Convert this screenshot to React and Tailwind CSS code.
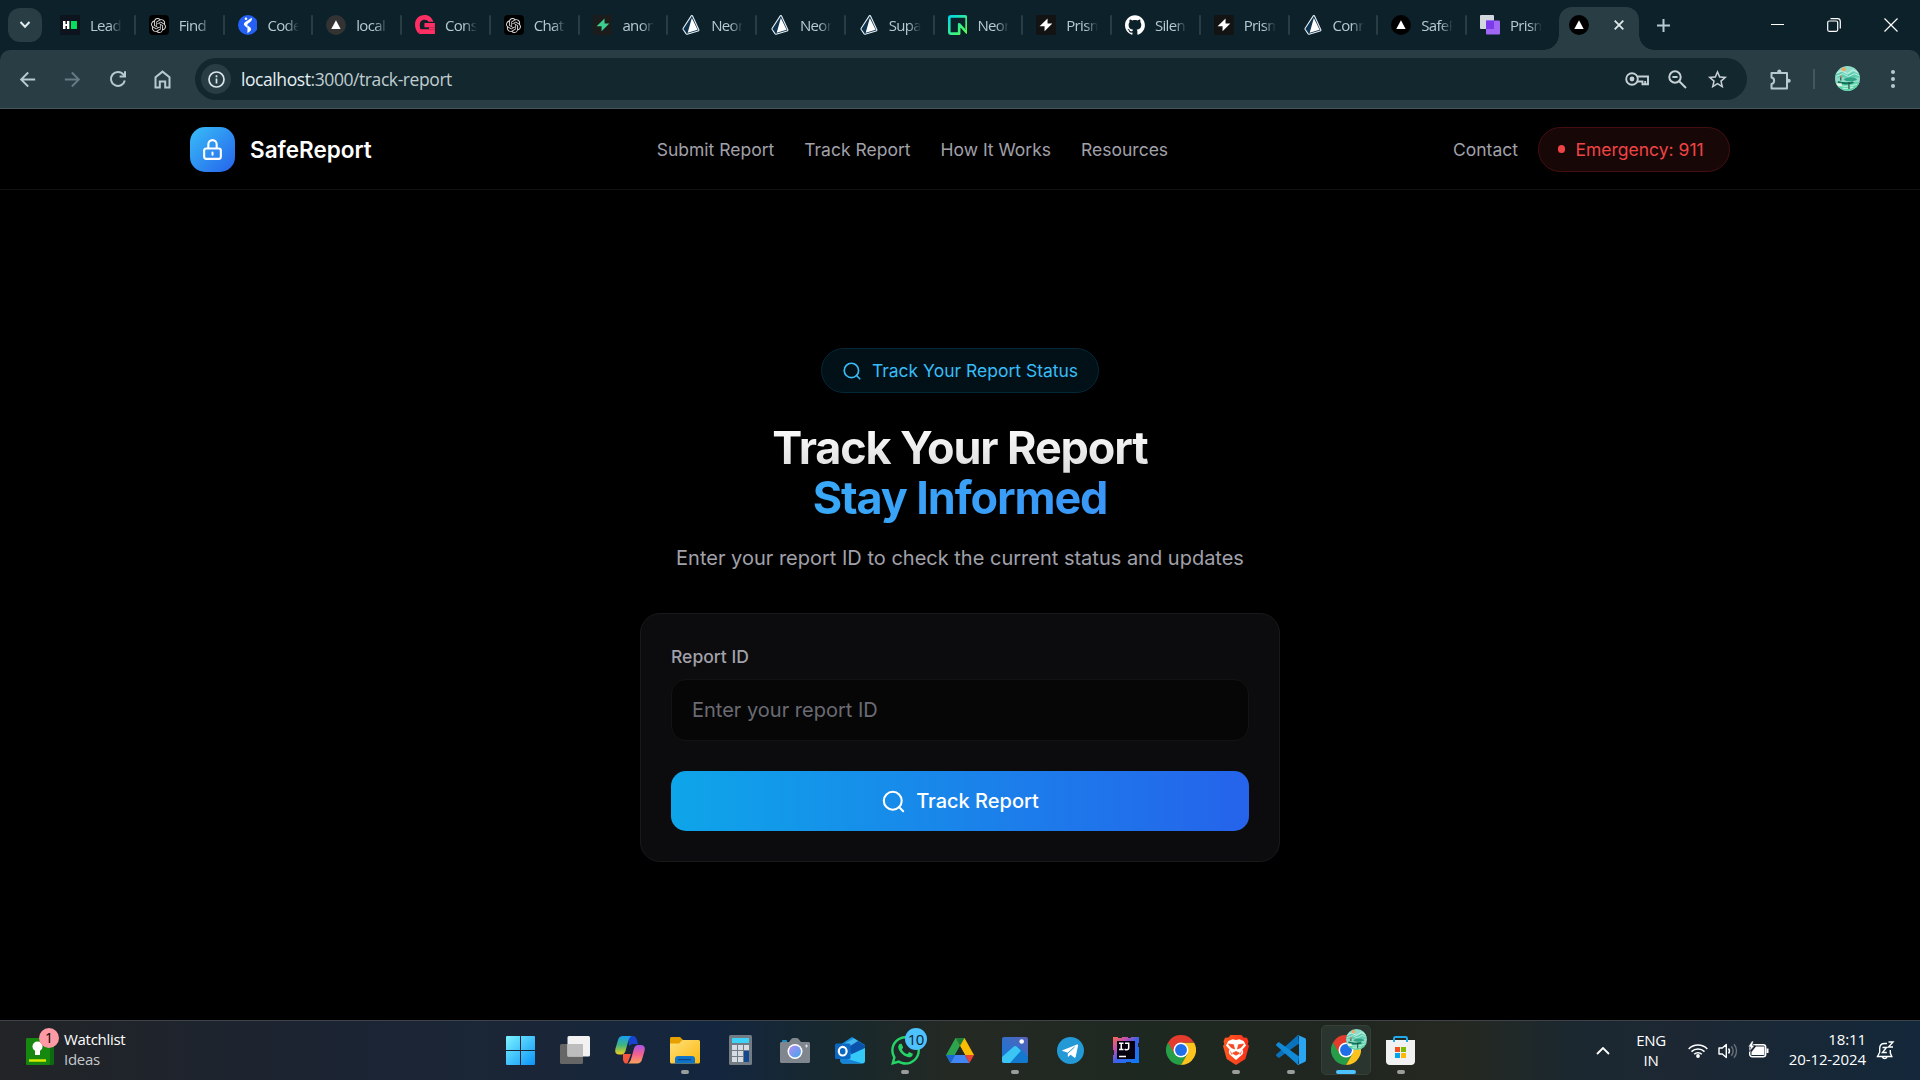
import React from "react";
import { SiOpenai, SiGithub } from "react-icons/si";
import { FaWhatsapp } from "react-icons/fa";
import { MdArrowBack, MdArrowForward, MdStarBorder } from "react-icons/md";

/* ---------- favicons ---------- */
const HackFav = () => (
  <svg className="size-5" viewBox="0 0 20 20">
    <rect width="20" height="20" fill="#0d141e" />
    <path d="M3 6h2.500v3H7V6h2.400v8H7v-3H5.500v3H3z" fill="#fff" />
    <rect x="11" y="6" width="6" height="8" fill="#05e060" />
  </svg>
);
const GptFav = () => (
  <span className="flex size-5 shrink-0 items-center justify-center rounded-[4px] bg-black text-[#d8d8d8]">
    <SiOpenai size={15} />
  </span>
);
const CodeFav = () => (
  <svg className="size-5" viewBox="0 0 20 20">
    <circle cx="10" cy="10" r="10" fill="#2560f4" />
    <circle cx="8" cy="3.800" r="1.300" fill="#fff" />
    <path d="M13.800 2.800c.5 2-.1 3.100-1.500 4.200L9.500 9v4.200L7 11c-1.500-1.200-1.500-2.500 0-3.800z" fill="#fff" />
    <path d="M9.500 10.200 12 12.300c1.500 1.300 1.500 2.500.3 3.800L9.500 18.200z" fill="#fff" />
  </svg>
);
const TriFav = ({ fill }) => (
  <svg className="size-5" viewBox="0 0 20 20">
    <circle cx="10" cy="10" r="10" fill={fill} />
    <path d="M10 5.300 14.700 14H5.300z" fill="#fff" />
  </svg>
);
const ConsFav = () => (
  <svg className="size-5" viewBox="0 0 20 20">
    <path d="M18.500 6.800C17 2.500 14 0 9.700 0 4 0 0 4 0 9.500 0 13 1.200 15.800 3.500 18.500L6 15.300C5 13.500 4.800 11.800 4.800 9.800 4.800 6.500 7 4.600 9.800 4.600c1.800 0 3 .7 3.900 2.200z" fill="#ff2e63" />
    <path d="M9.500 8H20v4.300H9.500z" fill="#ff2e63" />
    <path d="M5 14.200h15V19H4z" fill="#ff2e63" />
    <path d="M14 12.300h6v2h-6z" fill="#ff2e63" />
  </svg>
);
const BoltFav = ({ fill, bg }) => (
  <svg className="size-5" viewBox="0 0 20 20">
    <rect width="20" height="20" rx="1.500" fill={bg} />
    <path d="M11.600 3.500v5h4.800L8.600 16.300v-5.100H3.600z" fill={fill} />
  </svg>
);
const PrismaFav = () => (
  <svg className="size-5" viewBox="0 0 20 20">
    <path d="M10.300.8 2.200 13.200c-.3.500-.3.900 0 1.400l2.800 4.100c.3.500.7.600 1.200.5l11-3.200c.7-.2.900-.7.700-1.300L11.600 1c-.3-.7-.9-.7-1.300-.2z" fill="#0d3350" stroke="#e8eef2" strokeWidth="1.100" />
    <path d="M10.900 3 6.700 17.800l10-3z" fill="#fff" />
  </svg>
);
const NeonFav = () => (
  <svg className="size-5" viewBox="0 0 20 20">
    <defs>
      <linearGradient id="neon" x1="0" y1="0" x2="1" y2="1">
        <stop offset="0" stopColor="#00d8e8" />
        <stop offset="1" stopColor="#5cff4a" />
      </linearGradient>
    </defs>
    <path d="M18.700 17.500V3.200c0-1.300-.7-1.900-1.900-1.900H3.200c-1.300 0-1.900.6-1.900 1.900v13.600c0 1.200.6 1.900 1.900 1.900h8V9.200z" fill="none" stroke="url(#neon)" strokeWidth="2.600" strokeLinejoin="round" />
  </svg>
);
const GitFav = () => <SiGithub size={20} color="#fff" />;
const PurpleFav = () => (
  <svg className="size-5" viewBox="0 0 20 20">
    <rect width="14" height="14" rx="1" fill="#d0d8de" />
    <rect x="6" y="5.500" width="14" height="14" rx="1" fill="#a067f5" />
    <rect x="6" y="5.500" width="8" height="8.500" fill="#7c3aed" />
  </svg>
);

const TABS = [
  ["Lead", HackFav],
  ["Find", GptFav],
  ["Code", CodeFav],
  ["local", TriFav, { fill: "#333" }],
  ["Cons", ConsFav],
  ["Chat", GptFav],
  ["anon", BoltFav, { fill: "#3ecf8e", bg: "#1c1c1c" }],
  ["Neon", PrismaFav],
  ["Neon", PrismaFav],
  ["Supa", PrismaFav],
  ["Neon", NeonFav],
  ["Prism", BoltFav, { fill: "#fff", bg: "#131313" }],
  ["Silen", GitFav],
  ["Prism", BoltFav, { fill: "#fff", bg: "#131313" }],
  ["Conn", PrismaFav],
  ["SafeR", TriFav, { fill: "#000" }],
  ["Prism", PurpleFav],
];

function TabStrip() {
  return (
    <div className="flex h-[50px] bg-[#0c212a] text-[#b6cad2]">
      <div className="flex w-[47px] items-center pl-2">
        <div className="flex size-[34px] items-center justify-center rounded-xl bg-[#283d44]">
          <svg width="12" height="8" viewBox="0 0 12 8" fill="none" stroke="#e3edf0" strokeWidth="2">
            <path d="m1.500 1 4.500 4.700L10.500 1" />
          </svg>
        </div>
      </div>
      {TABS.map(([name, Fav, props], i) => (
        <div key={i} className="flex w-[88.750px] shrink-0 items-center pl-[13px]">
          <Fav {...props} />
          <span className="ml-[10px] w-[32px] overflow-hidden whitespace-nowrap text-[15px] tracking-[-0.650px] [mask-image:linear-gradient(to_right,black_60%,transparent)]">
            {name}
          </span>
          {i < TABS.length - 1 && <span className="ml-[12px] h-5 w-[2px] shrink-0 rounded bg-[#283d44]" />}
        </div>
      ))}
      <div className="relative ml-[3px] mt-[7px] flex h-[43px] w-[80px] shrink-0 items-center rounded-t-[13px] bg-[#283d44] pb-[7px] pl-[10px]">
        <span className="absolute bottom-0 -left-[15px] size-[15px] bg-[radial-gradient(circle_at_0_0,transparent_14.500px,#283d44_15px)]" />
        <span className="absolute bottom-0 -right-[15px] size-[15px] bg-[radial-gradient(circle_at_100%_0,transparent_14.500px,#283d44_15px)]" />
        <TriFav fill="#000" />
        <svg className="ml-[25px]" width="10" height="10" viewBox="0 0 10 10" stroke="#dfe8ec" strokeWidth="1.800">
          <path d="m.7.7 8.600 8.600M9.300.7.700 9.300" />
        </svg>
      </div>
      <div className="flex w-[49px] items-center justify-center">
        <svg width="13" height="13" viewBox="0 0 13 13" stroke="#b6cad2" strokeWidth="2">
          <path d="M6.500 0v13M0 6.500h13" />
        </svg>
      </div>
      <div className="ml-auto flex h-[49px] w-[171px] items-center text-white">
        <div className="flex w-[57px] justify-center"><span className="h-px w-[13px] bg-white" /></div>
        <div className="flex w-[56px] justify-center">
          <svg width="14" height="14" viewBox="0 0 14 14" fill="none" stroke="currentColor" strokeWidth="1.200">
            <rect x=".7" y="3" width="10" height="10.300" rx="1.500" />
            <path d="M3.500.700h7a2.800 2.800 0 0 1 2.800 2.800v7" />
          </svg>
        </div>
        <div className="flex w-[57px] justify-center">
          <svg width="14" height="14" viewBox="0 0 14 14" stroke="currentColor" strokeWidth="1.200">
            <path d="m.5.500 13 13M13.500.500l-13 13" />
          </svg>
        </div>
      </div>
    </div>
  );
}

function Avatar({ className }) {
  return (
    <svg className={className} viewBox="0 0 26 26">
      <defs><clipPath id="av"><circle cx="13" cy="13" r="13" /></clipPath></defs>
      <g clipPath="url(#av)">
        <rect width="26" height="26" fill="#8edcc8" />
        <path d="M0 9 7 6l6 3 6-3 7 3v3H0z" fill="#5fcbb0" />
        <path d="M0 8 7 5l6 3 6-4 7 4M1 11l7-3 6 3 6-3 5 2" stroke="#d4fff2" strokeWidth=".8" fill="none" />
        <circle cx="9" cy="3.500" r="2.200" fill="#f0a860" />
        <path d="M9 14c3-3 11-3 14 0-2 2-11 3-14 0z" fill="#2fa383" />
        <path d="M0 17h26v9H0z" fill="#5fd3a8" />
        <path d="M3 15.500c5 1.500 10 2 15 .5l2 1.500c-6 2.500-13 2-17 0z" fill="#11735a" />
        <path d="M5 20c5 2 12 1 18-1M8 23c4 1 8 0 11-1" stroke="#b6f2dd" strokeWidth="1.200" fill="none" />
        <path d="M1 18h6v3H3z" fill="#e9f3ea" />
        <path d="M6 11.500v3.500M14.500 17v7" stroke="#234b43" strokeWidth="1.200" />
        <circle cx="6" cy="11" r="1" fill="#d57c53" />
      </g>
    </svg>
  );
}

function Toolbar() {
  return (
    <div className="bg-[#0c212a]">
      <div className="flex h-[59px] items-center rounded-t-[10px] border-b border-[#45575d] bg-[#283d44] text-[#b6cad2]">
        <div className="flex w-[195px] items-center pl-[5px]">
          <div className="flex w-[45px] justify-center"><MdArrowBack size={23} /></div>
          <div className="flex w-[45px] justify-center text-[#667b83]"><MdArrowForward size={23} /></div>
          <div className="flex w-[45px] justify-center">
            <svg width="18" height="18" viewBox="0 0 18 18" fill="none" stroke="currentColor" strokeWidth="2">
              <path d="M15.800 10.500A7 7 0 1 1 14.500 4.600L16 6.300" />
              <path d="M16 1.200v5.300h-5.400" />
            </svg>
          </div>
          <div className="flex w-[45px] justify-center">
            <svg width="17" height="19" viewBox="0 0 17 19" fill="none" stroke="currentColor" strokeWidth="2">
              <path d="M1.500 7.200 8.500 1.600l7 5.600V17.500h-4.300v-6H5.800v6H1.500z" />
            </svg>
          </div>
        </div>
        <div className="flex h-[42px] w-[1552px] items-center rounded-full bg-[#13272e] pl-[6px] text-[#c5d0d4]">
          <span className="flex size-[30px] items-center justify-center rounded-full bg-[#283d44]">
            <svg width="17" height="17" viewBox="0 0 17 17" fill="none" stroke="#dbe6ea" strokeWidth="1.700">
              <circle cx="8.500" cy="8.500" r="7.500" />
              <path d="M8.500 7.500v5M8.500 4.300v1.900" />
            </svg>
          </span>
          <span className="ml-[10px] whitespace-nowrap text-[17.500px] tracking-[-0.420px] text-[#c0cdd1]">
            <span className="text-[#e6f0f3]">localhost</span>:3000/track-report
          </span>
          <div className="ml-auto mr-[10px] flex items-center">
            <div className="flex w-10 justify-center">
              <svg width="24" height="14" viewBox="0 0 24 14" fill="none" stroke="currentColor" strokeWidth="1.900">
                <circle cx="7" cy="7" r="5.800" />
                <circle cx="7" cy="7" r="2.400" fill="currentColor" stroke="none" />
                <path d="M12.300 4.500H23v7.700h-5.500V9.500h-5.200M20.200 9v3" />
              </svg>
            </div>
            <div className="flex w-10 justify-center">
              <svg width="19" height="19" viewBox="0 0 19 19" fill="none" stroke="currentColor" strokeWidth="2">
                <circle cx="7" cy="7" r="5.700" />
                <path d="m11.200 11.200 6.800 6.800M4.400 7h5.200" />
              </svg>
            </div>
            <div className="flex w-10 justify-center"><MdStarBorder size={23} /></div>
          </div>
        </div>
        <div className="flex w-[66px] justify-center">
          <svg width="21" height="21" viewBox="0 0 21 21" fill="none" stroke="currentColor" strokeWidth="2" strokeLinejoin="round">
            <path d="M1.500 4h15.500v15.500H1.500v-4.600a3.200 3.200 0 0 0 0-6.300z" />
            <circle cx="9.300" cy="2.600" r="2" fill="currentColor" stroke="none" />
            <circle cx="18.700" cy="11.700" r="2" fill="currentColor" stroke="none" />
          </svg>
        </div>
        <span className="h-5 w-[2px] bg-[#43575f]" />
        <Avatar className="-mt-px ml-[20px] size-[25px]" />
        <svg className="ml-[31px]" width="4" height="18" viewBox="0 0 4 18" fill="currentColor">
          <circle cx="2" cy="2" r="2" /><circle cx="2" cy="9" r="2" /><circle cx="2" cy="16" r="2" />
        </svg>
      </div>
    </div>
  );
}

/* ---------- web page ---------- */
const SearchIcon = ({ className }) => (
  <svg className={className} viewBox="0 0 24 24" fill="none" stroke="currentColor" strokeWidth="2" strokeLinecap="round" strokeLinejoin="round">
    <circle cx="11.300" cy="11.300" r="8.600" />
    <path d="m21.300 21.300-3.900-3.900" />
  </svg>
);

function SiteNav() {
  return (
    <nav className="h-[81px] border-b border-[#121212]">
      <div className="mx-auto flex h-20 w-[1540px] items-center justify-between text-[17.500px] text-[#a1a1aa]">
        <div className="flex items-center gap-[15px]">
          <div className="flex size-[45px] items-center justify-center rounded-[15px] bg-[linear-gradient(135deg,#38bdf8,#2563eb)]">
            <svg width="25" height="25" viewBox="0 0 24 24" fill="none" stroke="#fff" strokeWidth="2" strokeLinecap="round" strokeLinejoin="round">
              <path d="M12 15v2m-6 4h12a2 2 0 0 0 2-2v-6a2 2 0 0 0-2-2H6a2 2 0 0 0-2 2v6a2 2 0 0 0 2 2zm10-10V7a4 4 0 0 0-8 0v4h8z" />
            </svg>
          </div>
          <span className="pt-[2px] text-[22.500px] font-semibold text-white">SafeReport</span>
        </div>
        <div className="flex gap-[30px] pt-[2px]">
          <span>Submit Report</span>
          <span>Track Report</span>
          <span>How It Works</span>
          <span>Resources</span>
        </div>
        <div className="flex items-center gap-5">
          <span className="pt-[2px]">Contact</span>
          <div className="flex h-[45px] w-[192px] items-center gap-[10px] rounded-full border border-[#450f12] bg-[#180707] pl-[19px] text-[#ef4444]">
            <span className="size-[7.500px] rounded-full bg-[#ef4444]" />
            <span className="pt-[2px]">Emergency: 911</span>
          </div>
        </div>
      </div>
    </nav>
  );
}

function TrackForm() {
  return (
    <main className="flex flex-1 flex-col items-center pt-[158px]">
      <div className="flex h-[45px] items-center gap-[10px] rounded-full border border-[#03283a] bg-[#021017] px-[20px] text-[17.500px] text-[#38bdf8]">
        <SearchIcon className="size-5" />
        <span className="pt-[2px]">Track Your Report Status</span>
      </div>
      <h1 className="mt-[30px] text-center text-[45px] leading-[50px] font-bold tracking-[-0.025em]">
        <span className="block bg-[linear-gradient(to_bottom,#fff,#dcdcdc)] bg-clip-text text-transparent">Track Your Report</span>
        <span className="block w-[960px] bg-[linear-gradient(to_right,#38bdf8,#3b82f6)] bg-clip-text text-transparent">Stay Informed</span>
      </h1>
      <p className="mt-5 text-[20px] leading-[30px] text-[#a1a1aa]">Enter your report ID to check the current status and updates</p>
      <div className="mt-[40px] flex h-[249px] w-[640px] flex-col rounded-[20px] border border-[#19191b] bg-[#0c0c0e] px-[30px] pt-[30px]">
        <label className="text-[17.500px] leading-[25px] font-medium text-[#a1a1aa]">Report ID</label>
        <div className="mt-[10px] flex h-[62px] items-center rounded-[15px] border border-[#131314] bg-[#060606] px-5 text-[20px] text-[#6b6b74]">
          Enter your report ID
        </div>
        <button className="mt-[30px] flex h-[60px] items-center justify-center gap-[10px] rounded-[15px] bg-[linear-gradient(to_right,#0ea5e9,#2563eb)] text-[20px] font-medium text-white">
          <SearchIcon className="size-[25px]" />
          Track Report
        </button>
      </div>
    </main>
  );
}

/* ---------- taskbar icons ---------- */
const Windows = () => (
  <svg width="29" height="29" viewBox="0 0 29 29">
    <defs><linearGradient id="win" x1="0" y1="0" x2="29" y2="29" gradientUnits="userSpaceOnUse"><stop stopColor="#7cf3ff" /><stop offset="1" stopColor="#0a94f8" /></linearGradient></defs>
    <path d="M1 0h13v14H0V1a1 1 0 0 1 1-1zM15 0h13a1 1 0 0 1 1 1v13H15zM0 15h14v14H1a1 1 0 0 1-1-1zM15 15h14v13a1 1 0 0 1-1 1H15z" fill="url(#win)" />
  </svg>
);
const TaskView = () => (
  <svg width="30" height="28" viewBox="0 0 30 28">
    <rect y="8" width="23" height="20" rx="1.500" fill="#666" />
    <rect x="7.500" width="22.500" height="20.500" rx="1.500" fill="#f2f2f2" />
    <path d="M7.500 8H23v12.500H7.500z" fill="#bdbdbd" />
  </svg>
);
const Copilot = () => (
  <svg width="30" height="28" viewBox="0 0 30 28">
    <defs>
      <linearGradient id="cp1" x1="0" y1="0" x2="0" y2="1"><stop stopColor="#199df0" /><stop offset=".5" stopColor="#3fb67e" /><stop offset="1" stopColor="#f0cf1a" /></linearGradient>
      <linearGradient id="cp2" x1="0" y1="0" x2="0" y2="1"><stop stopColor="#a855e8" /><stop offset=".5" stopColor="#f4608f" /><stop offset="1" stopColor="#fba35c" /></linearGradient>
    </defs>
    <path d="M13 0h5c2.500 0 3.300 1.700 4 4l1 4h-6l-3 2z" fill="#1743cf" />
    <path d="M8 18h8l-3 8c-.5 1-1 1.500-2 1.500-2 0-2.500-2-3-4z" fill="#f4553f" />
    <path d="M8 0h9c-2 .5-3 2-4 6l-2.500 9c-.8 2.300-2 3.500-4 3.500H4c-3 0-4.500-2-3.500-6L3 4C3.700 1.500 5.300 0 8 0z" fill="url(#cp1)" />
    <path d="M22 27.500h-9.500c2-.5 3-2 4-6L19 12.500c.8-2.300 2-3.500 4-3.500h3c3 0 4.500 2 3.500 6L27 23.500c-.7 2.500-2.300 4-5 4z" fill="url(#cp2)" />
  </svg>
);
const Folder = () => (
  <svg width="30" height="27" viewBox="0 0 30 27">
    <defs><linearGradient id="fo" x1="0" y1="0" x2="1" y2="1"><stop stopColor="#ffe07a" /><stop offset="1" stopColor="#fbb80f" /></linearGradient></defs>
    <path d="M1.500 0H10l3 3-3 6H0V1.500C0 .7.700 0 1.500 0z" fill="#e6a100" />
    <path d="M0 6.500h9L12.500 3H28.500c.8 0 1.500.7 1.500 1.500V25c0 .8-.7 1.500-1.500 1.500h-27C.700 26.500 0 25.800 0 25z" fill="url(#fo)" />
    <path d="M5 26.500V22c0-2 1-3 3-3h14c2 0 3 1 3 3v4.500z" fill="#0f74c8" />
    <path d="M8 22.600h13" stroke="#064a8c" strokeWidth="1.300" />
  </svg>
);
const Calc = () => (
  <svg width="23" height="30" viewBox="0 0 23 30">
    <rect width="23" height="30" rx="1.500" fill="#737b84" />
    <rect x="3" y="3" width="17" height="5" fill="#3fd2f8" />
    <path d="M3 10h5v5H3zM9 10h5v5H9zM15 10h5v5h-5zM3 16h5v5H3zM9 16h5v5H9zM3 22h5v5H3zM9 22h5v5H9z" fill="#d5dce4" />
    <path d="M15 16h5v11h-5z" fill="#134a8f" />
  </svg>
);
const Camera = () => (
  <svg width="30" height="25" viewBox="0 0 30 25">
    <defs><linearGradient id="cam" x1="0" y1="0" x2="1" y2="1"><stop stopColor="#b58af2" /><stop offset="1" stopColor="#3fa7ea" /></linearGradient></defs>
    <rect x="2" y="2" width="5" height="4" rx="1" fill="#1b8fc4" />
    <path d="M9 4 11.500.800C12 .3 12.500 0 13.300 0h3.400c.8 0 1.300.3 1.800.8L21 4h7.500c.8 0 1.500.7 1.500 1.500v18c0 .8-.7 1.500-1.500 1.500h-27C.700 25 0 24.300 0 23.500v-18C0 4.700.700 4 1.500 4z" fill="#80868d" />
    <circle cx="15" cy="13.500" r="7.500" fill="#fff" />
    <circle cx="15" cy="13.500" r="6" fill="url(#cam)" />
    <path d="M26.500 6.500v3M25 8h3" stroke="#dde" strokeWidth="1" />
  </svg>
);
const Outlook = () => (
  <svg width="30" height="27" viewBox="0 0 30 27">
    <path d="M5 8 17 0l13 8v6L16 20 5 15z" fill="#1592e0" />
    <path d="m12 8 9-5 9 5.500v3L17 18z" fill="#0a52ac" />
    <path d="M9 7 19 1.500l4 2.500L12 11z" fill="#42b7ef" />
    <path d="M30 11v13c0 1.500-1 2.500-2.500 2.500H8c-1.500 0-2.500-1-2.500-2.500v-2L17 17z" fill="#35c9f8" />
    <path d="M5.500 20 28 26.400 8 26.500C6.500 26.500 5.500 25.500 5.500 24z" fill="#1683d8" />
    <rect y="6.500" width="15.500" height="15.500" rx="1.500" fill="#0c67c3" />
    <ellipse cx="7.700" cy="14.200" rx="3.900" ry="4.300" fill="none" stroke="#fff" strokeWidth="2.200" />
  </svg>
);
const WhatsApp = () => (
  <span className="relative">
    <FaWhatsapp size={33} color="#25d366" />
    <span className="absolute -top-[6px] left-[16px] flex size-[22px] items-center justify-center rounded-full bg-[#4cc2ff] text-[15px] tracking-tight text-[#10202a]">10</span>
  </span>
);
const Drive = () => (
  <svg width="28" height="25" viewBox="0 0 28 25">
    <path d="M9.500 0 0 17l4.500 8L14 8z" fill="#2da44e" />
    <path d="M18.500 0 28 17h-9L9.500 0z" fill="#fbbc04" />
    <path d="M9.500 0h9L14 8z" fill="#188038" />
    <path d="M9 17h10l4.500 8h-19z" fill="#4285f4" />
    <path d="M19 17h9l-4.500 8z" fill="#ea4335" />
    <path d="M0 17h9l-4.500 8z" fill="#1967d2" />
    <path d="M14 8 9 17h10z" fill="#222922" />
  </svg>
);
const Photos = () => (
  <svg width="26" height="26" viewBox="0 0 26 26">
    <defs><linearGradient id="ph" x1="0" y1="1" x2="1" y2="0"><stop stopColor="#0d7ad8" /><stop offset="1" stopColor="#5a62b8" /></linearGradient></defs>
    <rect width="26" height="26" rx="2" fill="url(#ph)" />
    <path d="m1 24.500 13-14c1-1 2-1 3 0l9 9.500v4c0 1.200-.8 2-2 2H3c-1 0-2-.7-2-1.500z" fill="#1279cf" />
    <path d="M0 20 11.500 9.700c1.200-1 2.300-1 3.500 0l4 4L8 26H2c-1.200 0-2-.8-2-2z" fill="#3ac5f5" />
    <circle cx="19.700" cy="4.500" r="2.300" fill="#fff" />
  </svg>
);
const Telegram = () => (
  <svg width="27" height="27" viewBox="0 0 27 27">
    <circle cx="13.500" cy="13.500" r="13.500" fill="#2399d6" />
    <path d="m5.500 13.300 14.500-5.800c.8-.3 1.300.2 1.100 1.100l-2.400 11.200c-.2.900-.8 1.100-1.500.6l-3.600-2.700-2 1.800c-.4.400-.9.200-.9-.3l.3-3.500-5.400-1.800c-.6-.2-.6-.4-.1-.6z" fill="#fff" />
    <path d="m11 16 6.500-6" stroke="#2399d6" strokeWidth="1" />
  </svg>
);
const IntelliJ = () => (
  <svg width="26" height="26" viewBox="0 0 26 26">
    <defs><linearGradient id="ij" x1="0" y1="0" x2="1" y2="1"><stop stopColor="#fe6a4c" /><stop offset=".28" stopColor="#c04fb0" /><stop offset=".5" stopColor="#3f62e8" /><stop offset="1" stopColor="#087cfa" /></linearGradient></defs>
    <path d="M0 0h5v1h4V0h6v1h3V0h8v6h-1v4h1v16h-8v-1h-5v1H0v-8h1v-5H0z" fill="url(#ij)" />
    <rect x="4" y="4" width="18" height="18" fill="#050010" />
    <path d="M6 6.200h4.500M8.250 6v7M6 12.600h4.500M12 6.200h3.700v4.600c0 1.400-.8 2-2 2-.8 0-1.500-.3-2-.9M6 19.500h7" stroke="#fff" strokeWidth="1.500" fill="none" />
  </svg>
);
const Chrome = () => (
  <svg width="30" height="30" viewBox="0 0 48 48">
    <path d="M3.200 12A24 24 0 0 0 24 48l10.400-18L24 36 13.600 18z" fill="#269d47" />
    <path d="M24 12h20.800A24 24 0 0 1 24 48l10.400-18z" fill="#fcc31e" />
    <path d="M24 12h20.800A24 24 0 0 0 3.200 12l10.400 18z" fill="#e33b2e" />
    <circle cx="24" cy="24" r="12" fill="#fff" />
    <circle cx="24" cy="24" r="9.500" fill="#1f70e8" />
  </svg>
);
const Brave = () => (
  <svg width="26" height="30" viewBox="0 0 26 30">
    <defs><linearGradient id="br"><stop stopColor="#ff5a20" /><stop offset="1" stopColor="#f8301a" /></linearGradient></defs>
    <path d="m7.500 0-2 2.500L2 2.800.500 6.500 1.300 9 0 11l3.700 13L13 30l9.300-6L26 11l-1.300-2 .8-2.500L24 2.800l-3.500-.3L18.500 0z" fill="url(#br)" />
    <path d="m13 5-3.300-.7L5.300 6 3 10.500l3.500 4-.8 2.700 1 2.300L13 25l6.300-5.500 1-2.300-.8-2.700 3.500-4L20.700 6l-4.400-1.700z" fill="#fff" />
    <path d="m5.500 9 5 .7 1 4.300-3.500-1.500zM20.500 9l-5 .7-1 4.300 3.500-1.500zM13 16.500l3.500 1.700-3.500 2-3.500-2zM7.500 16.500l1.500 3.300M18.500 16.500 17 19.800" fill="#f64a22" stroke="#f64a22" strokeWidth=".8" />
  </svg>
);
const VSCode = () => (
  <svg width="30" height="30" viewBox="0 0 30 30">
    <path d="m22 0 1 8.500L3.500 22.500c-.5.400-1 .4-1.500 0L.500 21c-.7-.6-.7-1.200 0-1.800z" fill="#0a72bd" />
    <path d="M22 30 23 21.500 3.500 7.500c-.5-.4-1-.4-1.500 0L.500 9c-.7.600-.7 1.200 0 1.800z" fill="#1289d6" />
    <path d="M22 0 28.700 3c.9.400 1.300 1 1.300 1.900v20.200c0 .9-.4 1.500-1.300 1.900L22 30c-.5 0-.9-.3-1-.7 1 .5 2 0 2-1V1.700c0-1-1-1.500-2-1z" fill="#29a5f4" />
    <path d="M23 8v14l7 3V5z" fill="#29a5f4" />
  </svg>
);
const ChromeProfile = () => (
  <span className="relative">
    <Chrome />
    <Avatar className="absolute -top-[6px] left-[15px] size-[21px]" />
  </span>
);
const Store = () => (
  <svg width="29" height="29" viewBox="0 0 29 29">
    <path d="M0 4h29v21c0 2.500-1.500 4-4 4H4c-2.500 0-4-1.500-4-4z" fill="#f1f1f1" />
    <path d="M8 6V2.500C8 1.500 8.500 1 9.500 1h10c1 0 1.500.5 1.500 1.500V6" fill="none" stroke="#22a8ec" strokeWidth="2" />
    <path d="M9 11h5v5H9z" fill="#f25022" /><path d="M15 11h5v5h-5z" fill="#7fba00" />
    <path d="M9 17h5v5H9z" fill="#00a4ef" /><path d="M15 17h5v5h-5z" fill="#ffb900" />
  </svg>
);

const APPS = [
  [Windows], [TaskView], [Copilot], [Folder, "open"], [Calc], [Camera], [Outlook], [WhatsApp, "open"], [Drive],
  [Photos, "open"], [Telegram], [IntelliJ], [Chrome], [Brave, "open"], [VSCode, "open"], [ChromeProfile, "active"], [Store, "open"],
];

function Taskbar() {
  return (
    <footer className="flex h-[60px] border-t border-[#3d4348] bg-[linear-gradient(to_right,#222426,#1b2433_18%,#1a2637_28%,#13263f_37%,#18282c_44%,#252923_50%,#1d2821_60%,#20261f_70%,#252821_76%,#1b2830_82%,#1c2733_88%,#13283a)] text-[15px] leading-5 text-white">
      <div className="flex w-[492.500px] shrink-0 items-center pl-[26px]">
        <span className="relative mt-[1px]">
          <svg width="28" height="27" viewBox="0 0 28 27">
            <rect width="28" height="27" rx="1.500" fill="#0c6a10" />
            <rect width="24" height="27" rx="1.500" fill="#16870f" />
            <path d="M3 22.500h17" stroke="#d6ea00" strokeWidth="2.500" />
            <circle cx="11.500" cy="8.500" r="5" fill="#fff" />
            <path d="M9 12h5v5H9z" fill="#fff" />
          </svg>
          <span className="absolute -top-[10px] left-[13px] flex size-5 items-center justify-center rounded-full bg-[#ff99a4] text-[14px] text-black">1</span>
        </span>
        <div className="-mt-[3px] ml-[10px] tracking-[-0.300px]">
          <div>Watchlist</div>
          <div className="text-[#c4c8cc]">Ideas</div>
        </div>
      </div>
      {APPS.map(([Icon, state], i) => (
        <div key={i} className="flex w-[55.060px] shrink-0 flex-col items-center pt-1">
          <div className={state === "active" ? "flex h-[50px] w-[50px] flex-col items-center rounded-[5px] border border-[#354038] bg-[#2a352f]" : "flex h-[50px] w-[50px] flex-col items-center border border-transparent"}>
            <div className="flex h-[48px] items-center justify-center">
              <Icon />
            </div>
          </div>
          {state === "open" && <span className="-mt-[5px] h-1 w-2 rounded-full bg-[#9a9d9c]" />}
          {state === "active" && <span className="-mt-[5px] h-1 w-5 rounded-full bg-[#4cc2ff]" />}
        </div>
      ))}
      <div className="ml-auto flex items-center pr-[25px]">
        <svg width="14" height="8" viewBox="0 0 14 8" fill="none" stroke="#fff" strokeWidth="1.800"><path d="m1 7 6-6 6 6" /></svg>
        <div className="-mt-[2px] ml-[26px] w-[30px] text-center tracking-[-0.300px]">
          <div>ENG</div>
          <div>IN</div>
        </div>
        <svg className="ml-[22px]" width="20" height="15" viewBox="0 0 20 15" fill="none" stroke="#fff" strokeWidth="1.500">
          <path d="M.700 6a13 13 0 0 1 18.600 0M3.500 8.600a9.200 9.200 0 0 1 13 0M6.200 11.200a5.400 5.400 0 0 1 7.600 0" />
          <circle cx="10" cy="13" r="1.900" fill="#fff" stroke="none" />
        </svg>
        <svg className="ml-[10px]" width="20" height="18" viewBox="0 0 20 18" fill="none" stroke="#fff" strokeWidth="1.400">
          <path d="M1 6h3.300L8.300 2.500v13L4.300 12H1z" strokeLinejoin="round" />
          <path d="M10.500 6.500a4 4 0 0 1 0 5" />
          <path d="M13.300 4.200a7.300 7.300 0 0 1 0 9.600M16 2.200a10.500 10.500 0 0 1 0 13.600" stroke="#69717a" />
        </svg>
        <svg className="-mt-[2px] ml-[10px]" width="21" height="17" viewBox="0 0 21 17">
          <rect x="1.700" y="3.700" width="16" height="12" rx="2.500" fill="none" stroke="#fff" strokeWidth="1.400" />
          <path d="M8 5.500h8.500v8.500H3.500V11z" fill="#fff" />
          <path d="M18.500 7.500h2v4.500h-2z" fill="#fff" />
          <path d="M3.800 0 0 6h2.300L1.500 10.500 7 4.300H4.500L5.700 0z" fill="#fff" stroke="#1c2733" strokeWidth=".7" />
        </svg>
        <div className="-mt-[4px] ml-[17px] w-[80px] text-right tracking-[-0.100px]">
          <div>18:11</div>
          <div className="whitespace-nowrap">20-12-2024</div>
        </div>
        <svg className="ml-[10px]" width="19" height="19" viewBox="0 0 19 19" fill="none" stroke="#fff" strokeWidth="1.400">
          <path d="M11 2.500H8.500C5.500 2.500 3.700 4.500 3.700 7.500v3.700L1.500 15.500h14.300l-1.500-3.500V9M6.500 16a2.300 2.300 0 0 0 4.400 0" />
          <path d="M6.500 6.500h4l-4 5h4.300M12.500 1h4.500l-4.500 5h4.500" />
        </svg>
      </div>
    </footer>
  );
}

export default function App() {
  return (
    <div className="flex h-[1080px] w-[1920px] flex-col overflow-hidden bg-black font-['Open_Sans','Noto_Sans',sans-serif]">
      <TabStrip />
      <Toolbar />
      <div className="flex flex-1 flex-col font-[Inter,sans-serif]">
        <SiteNav />
        <TrackForm />
      </div>
      <Taskbar />
    </div>
  );
}
